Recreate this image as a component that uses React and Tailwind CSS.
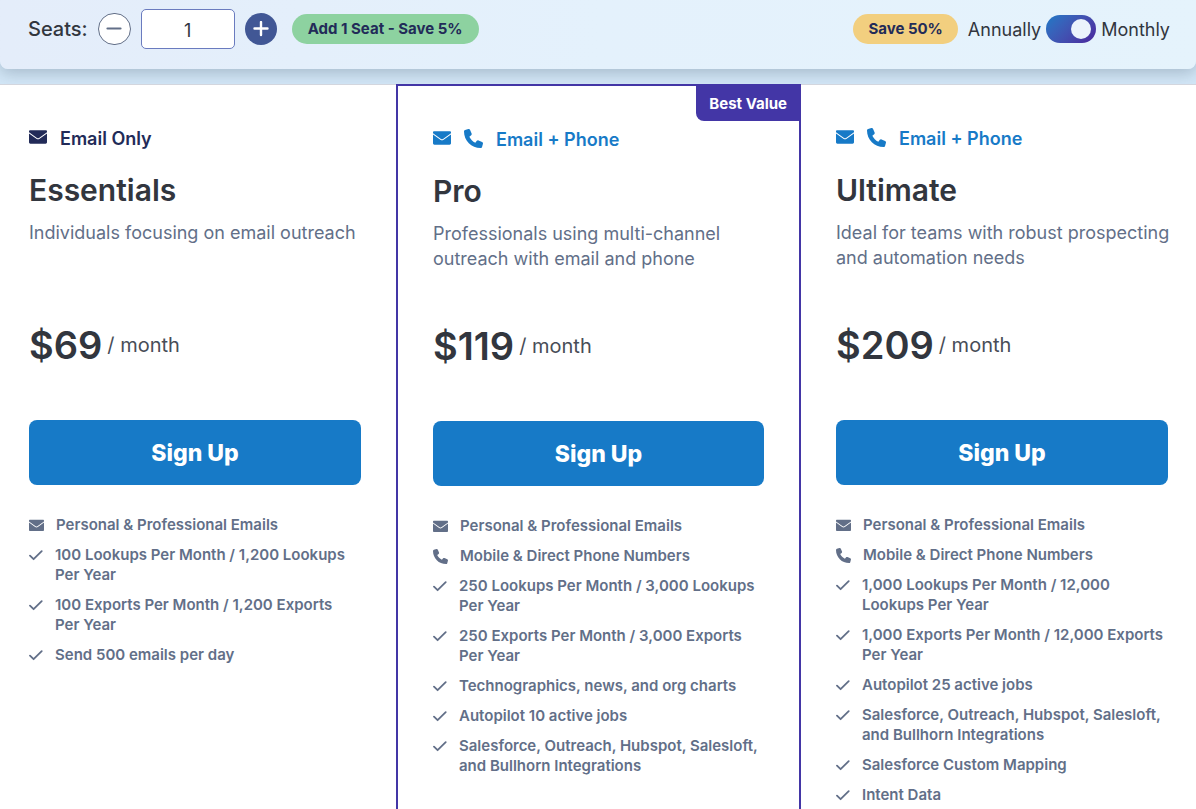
import { useState } from 'react'
import { FaPhone } from 'react-icons/fa6'

const plans = [
  {
    name: 'Essentials',
    channel: 'Email Only',
    description: 'Individuals focusing on email outreach',
    price: 69,
    phone: false,
    features: [
      '100 Lookups Per Month / 1,200 Lookups Per Year',
      '100 Exports Per Month / 1,200 Exports Per Year',
      'Send 500 emails per day',
    ],
    card: 'border-t border-[#d3d6de] pl-[29px] pr-[35px]',
    accent: 'text-[#222b58]',
  },
  {
    name: 'Pro',
    channel: 'Email + Phone',
    description: 'Professionals using multi-channel outreach with email and phone',
    price: 119,
    phone: true,
    best: true,
    features: [
      '250 Lookups Per Month / 3,000 Lookups Per Year',
      '250 Exports Per Month / 3,000 Exports Per Year',
      'Technographics, news, and org charts',
      'Autopilot 10 active jobs',
      'Salesforce, Outreach, Hubspot, Salesloft, and Bullhorn Integrations',
    ],
    card: 'relative border-x-2 border-t-2 border-[#4336a6] px-[35px]',
    accent: 'text-[#177ac7]',
  },
  {
    name: 'Ultimate',
    channel: 'Email + Phone',
    description: 'Ideal for teams with robust prospecting and automation needs',
    price: 209,
    phone: true,
    features: [
      '1,000 Lookups Per Month / 12,000 Lookups Per Year',
      '1,000 Exports Per Month / 12,000 Exports Per Year',
      'Autopilot 25 active jobs',
      'Salesforce, Outreach, Hubspot, Salesloft, and Bullhorn Integrations',
      'Salesforce Custom Mapping',
      'Intent Data',
    ],
    card: 'border-t border-[#d3d6de] pl-[35px] pr-[28px]',
    accent: 'text-[#177ac7]',
  },
]

function CheckIcon() {
  return (
    <svg viewBox="0 0 14 14" className="mt-[3px] size-[14px] shrink-0" fill="none" stroke="currentColor" strokeWidth="1.8" strokeLinecap="round" strokeLinejoin="round">
      <path d="M1 7.7 4.6 11.2 12.7 3.2" />
    </svg>
  )
}

function EnvelopeIcon({ className }) {
  return (
    <svg viewBox="0 0 18 18" className={className} fill="currentColor">
      <path d="M1.2 2.2h15.6c.7 0 1.2.5 1.2 1.1v.9L10 9.9c-.6.4-1.4.4-2 0L0 4.2v-.9c0-.6.5-1.1 1.2-1.1z" />
      <path d="M0 5.5 7.4 10.8c1 .7 2.2.7 3.2 0L18 5.5v8.8c0 .8-.6 1.4-1.4 1.4H1.4C.6 15.7 0 15.1 0 14.3z" />
    </svg>
  )
}

function Header({ seats, setSeats, monthly, setMonthly }) {
  return (
    <header className="flex items-center justify-between rounded-b-lg bg-linear-to-r from-[#e4edfa] via-[#e4f1fc] to-[#e5f3fc] pt-[9px] pr-[26px] pb-5 pl-7 shadow-[0_4px_16px_rgba(60,80,100,0.3)]">
      <div className="flex items-center gap-[10px]">
        <label htmlFor="seats" className="text-[20px] leading-6 font-medium text-[#32363e]">Seats:</label>
        <button
          type="button"
          aria-label="Remove seat"
          className="flex h-8 w-[33px] items-center justify-center rounded-full border border-[#626f88] bg-white text-[#626f88]"
          onClick={() => setSeats(Math.max(1, seats - 1))}
        >
          <svg viewBox="0 0 16 16" className="size-4" stroke="currentColor" strokeWidth="2.2" strokeLinecap="round">
            <path d="M1.5 7.5h13" />
          </svg>
        </button>
        <input
          id="seats"
          className="h-10 w-[94px] rounded-[5px] border border-[#6a7bbf] bg-white pt-0.5 text-center text-[18px] text-[#32363e]"
          value={seats}
          onChange={e => setSeats(Number(e.target.value) || 1)}
        />
        <button
          type="button"
          aria-label="Add seat"
          className="flex size-8 items-center justify-center rounded-full bg-[#415795] text-white"
          onClick={() => setSeats(seats + 1)}
        >
          <svg viewBox="0 0 16 16" className="size-4" stroke="currentColor" strokeWidth="2.4" strokeLinecap="round">
            <path d="M1.5 7.5h13M8 1v13" />
          </svg>
        </button>
        <span className="ml-[5px] rounded-full bg-[#8dd2a0] px-4 text-[15px] leading-[30px] font-bold text-[#222b58]">Add 1 Seat - Save 5%</span>
      </div>

      <div className="flex items-center gap-[5px] text-[18px] leading-6 text-[#32363e]">
        <span className="mr-[5px] rounded-full bg-[#f2cf7f] px-[15px] text-[15px] leading-[30px] font-bold text-[#222b58]">Save 50%</span>
        <span className="pt-0.5">Annually</span>
        <label className="flex h-7 w-[50px] cursor-pointer items-center rounded-full bg-linear-135 from-[#177ac7] to-[#4a249c] px-[5px]">
          <input
            type="checkbox"
            aria-label="Monthly billing"
            className="peer sr-only"
            checked={monthly}
            onChange={e => setMonthly(e.target.checked)}
          />
          <span className="size-5 rounded-full bg-[#ebf3fc] peer-checked:ml-auto" />
        </label>
        <span className="pt-0.5">Monthly</span>
      </div>
    </header>
  )
}

function Plan({ plan }) {
  return (
    <section className={`${plan.card} bg-white pt-[39px] pb-1`}>
      {plan.best && (
        <div className="absolute -top-0.5 -right-0.5 rounded-bl-lg bg-[#4336a6] pt-[9px] pr-[14px] pb-[7px] pl-[13px] text-[15px] leading-[21px] font-bold text-white">Best Value</div>
      )}

      <div className={`flex h-[26px] items-center gap-[13px] text-[18px] font-semibold ${plan.accent}`}>
        <EnvelopeIcon className="size-[18px]" />
        {plan.phone && <FaPhone className="size-[19px]" />}
        <span className="pt-0.5">{plan.channel}</span>
      </div>

      <h2 className="mt-5 text-[30px] leading-10 font-semibold text-[#32363e]">{plan.name}</h2>
      <p className="mt-[10px] -mr-1 h-[50px] text-[18px] leading-[25px] text-[#626f88]">{plan.description}</p>

      <div className="mt-[50px] flex h-[50px] items-center gap-[5px]">
        <span className="text-[38px] leading-[50px] font-semibold text-[#32363e]">${plan.price}</span>
        <span className="text-[20px] leading-[50px] text-[#484d57]">/ month</span>
      </div>

      <button type="button" className="mt-[50px] h-[65px] w-full rounded-lg bg-[#177ac7] pt-0.5 text-[23px] font-extrabold text-white">Sign Up</button>

      <ul className="mt-[30px] space-y-[10px] pr-[3px] text-[15px] leading-5 font-semibold text-[#626f88]">
        <li className="flex items-center gap-3">
          <EnvelopeIcon className="size-[15px]" />
          Personal &amp; Professional Emails
        </li>
        {plan.phone && (
          <li className="flex items-center gap-3">
            <FaPhone className="size-[15px]" />
            Mobile &amp; Direct Phone Numbers
          </li>
        )}
        {plan.features.map(feature => (
          <li key={feature} className="flex items-start gap-3">
            <CheckIcon />
            <span>{feature}</span>
          </li>
        ))}
      </ul>
    </section>
  )
}

export default function App() {
  const [seats, setSeats] = useState(1)
  const [monthly, setMonthly] = useState(true)

  return (
    <div className="flex min-h-screen flex-col bg-[#d3e7f7] font-['Inter',sans-serif]">
      <Header seats={seats} setSeats={setSeats} monthly={monthly} setMonthly={setMonthly} />
      <main className="relative mt-[15px] grid grow grid-cols-[396fr_405fr_395fr]">
        {plans.map(plan => <Plan key={plan.name} plan={plan} />)}
      </main>
    </div>
  )
}
